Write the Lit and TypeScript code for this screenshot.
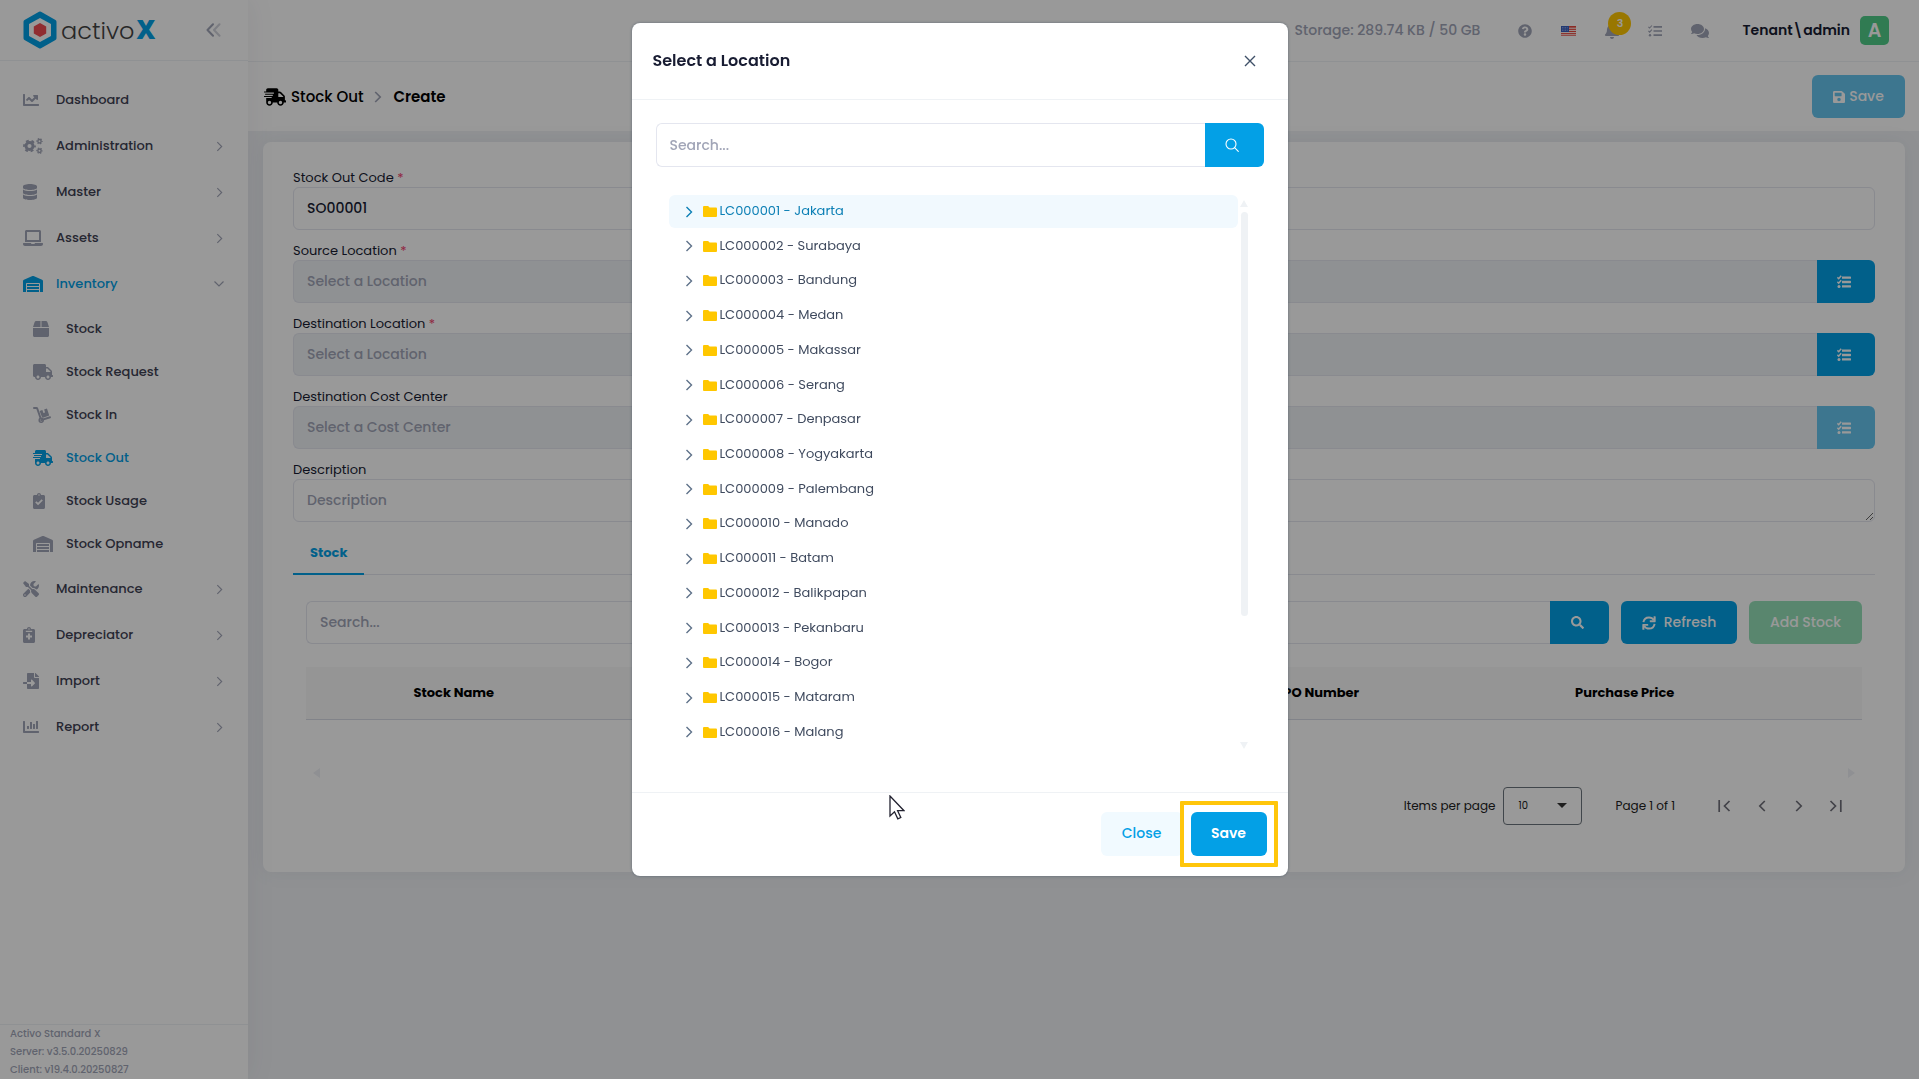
import { LitElement, html, svg, css, nothing } from "lit";
import { customElement, property } from "lit/decorators.js";
import { classMap } from "lit/directives/class-map.js";

type Glyph = { box: string; art: unknown };

const WHEELS =
  "M160 464c-26.5 0-48-21.5-48-48s21.5-48 48-48 48 21.5 48 48-21.5 48-48 48zm320 0c-26.5 0-48-21.5-48-48s21.5-48 48-48 48 21.5 48 48-21.5 48-48 48zm80-208H416V144h44.1l99.9 99.9V256z";

const GLYPHS: Record<string, Glyph> = {
  chartLine: {
    box: "0 0 512 512",
    art: svg`<path d="M496 384H64V80c0-8.84-7.16-16-16-16H16C7.16 64 0 71.16 0 80v336c0 17.67 14.33 32 32 32h464c8.84 0 16-7.16 16-16v-32c0-8.84-7.16-16-16-16zM464 96H345.94c-21.38 0-32.09 25.85-16.97 40.97l32.4 32.4L288 242.75l-73.37-73.37c-12.5-12.5-32.76-12.5-45.25 0l-68.69 68.69c-6.25 6.25-6.25 16.38 0 22.63l22.62 22.62c6.25 6.25 16.38 6.25 22.63 0L192 237.25l73.37 73.37c12.5 12.5 32.76 12.5 45.25 0l96-96 32.4 32.4c15.12 15.12 40.97 4.41 40.97-16.97V112c.01-8.84-7.15-16-15.99-16z"/>`,
  },
  cogs: {
    box: "0 0 640 512",
    art: svg`<g fill="none" stroke="currentColor">
      <circle cx="208" cy="256" r="112" stroke-width="92"/>
      <circle cx="208" cy="256" r="176" stroke-width="56" stroke-dasharray="92 92.3" stroke-dashoffset="46"/>
      <circle cx="528" cy="104" r="54" stroke-width="46"/>
      <circle cx="528" cy="104" r="86" stroke-width="34" stroke-dasharray="45 45" stroke-dashoffset="22"/>
      <circle cx="528" cy="408" r="54" stroke-width="46"/>
      <circle cx="528" cy="408" r="86" stroke-width="34" stroke-dasharray="45 45" stroke-dashoffset="22"/></g>`,
  },
  database: {
    box: "0 0 448 512",
    art: svg`<path d="M448 73.143v45.714C448 159.143 347.667 192 224 192S0 159.143 0 118.857V73.143C0 32.857 100.333 0 224 0s224 32.857 224 73.143zM448 176v102.857C448 319.143 347.667 352 224 352S0 319.143 0 278.857V176c48.125 33.143 136.208 48.572 224 48.572S399.874 209.143 448 176zm0 160v102.857C448 479.143 347.667 512 224 512S0 479.143 0 438.857V336c48.125 33.143 136.208 48.572 224 48.572S399.874 369.143 448 336z"/>`,
  },
  laptop: {
    box: "0 0 640 512",
    art: svg`<path d="M624 416H381.54c-.74 19.81-14.71 32-32.74 32H288c-18.69 0-33.02-17.47-32.77-32H16c-8.8 0-16 7.2-16 16v16c0 35.2 28.8 64 64 64h512c35.2 0 64-28.8 64-64v-16c0-8.8-7.2-16-16-16zM576 48c0-26.4-21.6-48-48-48H112C85.6 0 64 21.6 64 48v336h512V48zm-64 272H128V64h384v256z"/>`,
  },
  warehouse: {
    box: "0 0 640 512",
    art: svg`<path d="M504 352H136.4c-4.4 0-8 3.6-8 8l-.1 48c0 4.4 3.6 8 8 8H504c4.4 0 8-3.6 8-8v-48c0-4.4-3.6-8-8-8zm0 96H136.1c-4.4 0-8 3.6-8 8l-.1 48c0 4.4 3.6 8 8 8h368c4.4 0 8-3.6 8-8v-48c0-4.4-3.6-8-8-8zm0-192H136.6c-4.4 0-8 3.6-8 8l-.1 48c0 4.4 3.6 8 8 8H504c4.4 0 8-3.6 8-8v-48c0-4.4-3.6-8-8-8zm106.5-139L338.4 3.7a48.15 48.15 0 0 0-36.9 0L29.5 117C11.7 124.5 0 141.9 0 161.3V504c0 4.4 3.6 8 8 8h80c4.4 0 8-3.6 8-8V256c0-17.6 14.6-32 32.6-32h382.8c18 0 32.6 14.4 32.6 32v248c0 4.4 3.6 8 8 8h80c4.4 0 8-3.6 8-8V161.3c0-19.4-11.7-36.8-29.5-44.3z"/>`,
  },
  box: {
    box: "0 0 512 512",
    art: svg`<path d="M509.5 184.6L458.9 32.8C452.4 13.2 434.1 0 413.4 0H272v192h238.7c-.4-2.5-.4-5-1.2-7.4zM240 0H98.6c-20.7 0-39 13.2-45.5 32.8L2.5 184.6c-.8 2.4-.8 4.9-1.2 7.4H240V0zM0 224v240c0 26.5 21.5 48 48 48h416c26.5 0 48-21.5 48-48V224H0z"/>`,
  },
  truck: {
    box: "0 0 640 512",
    art: svg`<path d="M624 352h-16V243.9c0-12.7-5.1-24.9-14.1-33.9L494 110.1c-9-9-21.2-14.1-33.9-14.1H416V48c0-26.5-21.5-48-48-48H48C21.5 0 0 21.5 0 48v320c0 26.5 21.5 48 48 48h16c0 53 43 96 96 96s96-43 96-96h128c0 53 43 96 96 96s96-43 96-96h48c8.8 0 16-7.2 16-16v-32c0-8.8-7.2-16-16-16z${WHEELS}" fill-rule="evenodd"/>`,
  },
  dolly: {
    box: "0 0 576 512",
    art: svg`<path d="M30 30h82c10 0 18 6 21 15l112 320" fill="none" stroke="currentColor" stroke-width="60" stroke-linecap="round" stroke-linejoin="round"/>
      <path d="M262 420l284-92" fill="none" stroke="currentColor" stroke-width="60" stroke-linecap="round"/>
      <circle cx="262" cy="424" r="64" fill="none" stroke="currentColor" stroke-width="46"/>
      <path d="M232 118l68-24 32 96 56-18-32-96 68-24c12-4 24 2 28 14l62 188c4 12-2 24-14 28L318 342c-12 4-24-2-28-14L218 146c-4-12 2-24 14-28z"/>`,
  },
  truckFast: {
    box: "0 0 640 512",
    art: svg`<path d="M624 352h-16V243.9c0-12.7-5.1-24.9-14.1-33.9L494 110.1c-9-9-21.2-14.1-33.9-14.1H416V48c0-26.5-21.5-48-48-48H112C85.5 0 64 21.5 64 48v48H8c-4.4 0-8 3.6-8 8v16c0 4.4 3.6 8 8 8h272c4.4 0 8 3.6 8 8v16c0 4.4-3.6 8-8 8H40c-4.4 0-8 3.6-8 8v16c0 4.4 3.6 8 8 8h208c4.4 0 8 3.6 8 8v16c0 4.4-3.6 8-8 8H8c-4.4 0-8 3.6-8 8v16c0 4.4 3.6 8 8 8h208c4.4 0 8 3.6 8 8v16c0 4.4-3.6 8-8 8H64v128c0 53 43 96 96 96s96-43 96-96h128c0 53 43 96 96 96s96-43 96-96h48c8.8 0 16-7.2 16-16v-32c0-8.8-7.2-16-16-16z${WHEELS}" fill-rule="evenodd"/>`,
  },
  clipboardCheck: {
    box: "0 0 384 512",
    art: svg`<path fill-rule="evenodd" d="M336 64h-80c0-35.3-28.7-64-64-64s-64 28.7-64 64H48C21.5 64 0 85.5 0 112v352c0 26.5 21.5 48 48 48h288c26.5 0 48-21.5 48-48V112c0-26.5-21.5-48-48-48zM192 40c13.3 0 24 10.7 24 24s-10.7 24-24 24-24-10.7-24-24 10.7-24 24-24zM70 300l40-40 52 52 114-114 40 40-154 154z"/>`,
  },
  clipboardPlus: {
    box: "0 0 384 512",
    art: svg`<path fill-rule="evenodd" d="M336 64h-80c0-35.3-28.7-64-64-64s-64 28.7-64 64H48C21.5 64 0 85.5 0 112v352c0 26.5 21.5 48 48 48h288c26.5 0 48-21.5 48-48V112c0-26.5-21.5-48-48-48zM192 36c13.3 0 24 10.7 24 24s-10.7 24-24 24-24-10.7-24-24 10.7-24 24-24zM90 120h204v36H90zM160 208h64v64h64v60h-64v64h-64v-64H96v-60h64z"/>`,
  },
  tools: {
    box: "0 0 512 512",
    art: svg`<path d="M501.1 395.7L384 278.6c-23.1-23.1-57.6-27.6-85.4-13.9L192 158.1V96L64 0 0 64l96 128h62.1l106.6 106.6c-13.6 27.8-9.2 62.3 13.9 85.4l117.1 117.1c14.6 14.6 38.2 14.6 52.7 0l52.7-52.7c14.5-14.6 14.5-38.2 0-52.7zM331.7 225c28.3 0 54.9 11 74.9 31l19.4 19.4c15.8-6.9 30.8-16.5 43.8-29.5 37.1-37.1 49.7-89.3 37.9-136.7-2.2-9-13.5-12.1-20.1-5.5l-74.4 74.4-67.9-11.3L334 98.9l74.4-74.4c6.6-6.6 3.4-17.9-5.7-20.2-47.4-11.7-99.6.9-136.6 37.9-28.5 28.5-41.9 66.1-41.2 103.6l82.1 82.1c8.1-1.9 16.5-2.9 24.7-2.9zm-103.9 82l-56.7-56.7L18.7 402.8c-25 25-25 65.5 0 90.5s65.5 25 90.5 0l123.6-123.6c-7.6-19.9-9.9-41.6-5-62.7zM64 472c-13.2 0-24-10.8-24-24 0-13.3 10.7-24 24-24s24 10.7 24 24c0 13.2-10.7 24-24 24z"/>`,
  },
  fileImport: {
    box: "0 0 512 512",
    art: svg`<path d="M16 288c-8.8 0-16 7.2-16 16v32c0 8.8 7.2 16 16 16h112v-64zm489-183L407.1 7c-4.5-4.5-10.6-7-17-7H384v128h128v-6.1c0-6.3-2.5-12.4-7-16.9zm-153 31V0H152c-13.3 0-24 10.7-24 24v264h128v-65.2c0-14.3 17.3-21.4 27.4-11.3L379 308c6.6 6.7 6.6 17.4 0 24l-95.7 96.4c-10.1 10.1-27.4 3-27.4-11.3V352H128v136c0 13.3 10.7 24 24 24h336c13.3 0 24-10.7 24-24V160H376c-13.2 0-24-10.8-24-24z"/>`,
  },
  chartBar: {
    box: "0 0 512 512",
    art: svg`<path d="M332.8 320h38.4c6.4 0 12.8-6.4 12.8-12.8V172.8c0-6.4-6.4-12.8-12.8-12.8h-38.4c-6.4 0-12.8 6.4-12.8 12.8v134.4c0 6.4 6.4 12.8 12.8 12.8zm96 0h38.4c6.4 0 12.8-6.4 12.8-12.8V76.8c0-6.4-6.4-12.8-12.8-12.8h-38.4c-6.4 0-12.8 6.4-12.8 12.8v230.4c0 6.4 6.4 12.8 12.8 12.8zm-288 0h38.4c6.4 0 12.8-6.4 12.8-12.8v-70.4c0-6.4-6.4-12.8-12.8-12.8h-38.4c-6.4 0-12.8 6.4-12.8 12.8v70.4c0 6.4 6.4 12.8 12.8 12.8zm96 0h38.4c6.4 0 12.8-6.4 12.8-12.8V108.8c0-6.4-6.4-12.8-12.8-12.8h-38.4c-6.4 0-12.8 6.4-12.8 12.8v198.4c0 6.4 6.4 12.8 12.8 12.8zM496 384H64V80c0-8.84-7.16-16-16-16H16C7.16 64 0 71.16 0 80v336c0 17.67 14.33 32 32 32h464c8.84 0 16-7.16 16-16v-32c0-8.84-7.16-16-16-16z"/>`,
  },
  help: {
    box: "0 0 512 512",
    art: svg`<path d="M504 256c0 136.997-111.043 248-248 248S8 392.997 8 256C8 119.083 119.043 8 256 8s248 111.083 248 248zM262.655 90c-54.497 0-89.255 22.957-116.549 63.758-3.536 5.286-2.353 12.415 2.715 16.258l34.699 26.31c5.205 3.947 12.621 3.008 16.665-2.122 17.864-22.658 30.113-35.797 57.303-35.797 20.429 0 45.698 13.148 45.698 32.958 0 14.976-12.363 22.667-32.534 33.976C247.128 238.528 216 254.941 216 296v4c0 6.627 5.373 12 12 12h56c6.627 0 12-5.373 12-12v-1.333c0-28.462 83.186-29.647 83.186-106.667 0-58.002-60.165-102-116.531-102zM256 338c-25.365 0-46 20.635-46 46 0 25.364 20.635 46 46 46s46-20.636 46-46c0-25.365-20.635-46-46-46z"/>`,
  },
  bell: {
    box: "0 0 448 512",
    art: svg`<path d="M224 512c35.32 0 63.97-28.65 63.97-64H160.03c0 35.35 28.65 64 63.97 64zm215.39-149.71c-19.32-20.76-55.47-51.99-55.47-154.29 0-77.7-54.48-139.9-127.94-155.16V32c0-17.67-14.32-32-31.98-32s-31.98 14.33-31.98 32v20.84C118.56 68.1 64.08 130.3 64.08 208c0 102.3-36.15 133.53-55.47 154.29-6 6.45-8.66 14.16-8.61 21.71.11 16.4 12.98 32 32.1 32h383.8c19.12 0 32-15.6 32.1-32 .05-7.55-2.61-15.27-8.61-21.71z"/>`,
  },
  tasks: {
    box: "0 0 14 12",
    art: svg`<path d="M5.5 1.1H14v1.6H5.5zM5.5 5.2H14v1.6H5.5zM5.5 9.3H14v1.6H5.5z"/><circle cx="2" cy="10.2" r="1.2"/><path d="M.4 1.8l1.2 1.2L3.9.5M.4 5.9l1.2 1.2L3.9 4.6" fill="none" stroke="currentColor" stroke-width="1.1"/>`,
  },
  tasksBold: {
    box: "0 0 14 14",
    art: svg`<path d="M5 1.400h8.400q.6 0 .6.6v1.200q0 .6-.6.6H5zM5 5.800h8.400q.6 0 .6.6v1.200q0 .6-.6.6H5zM5 10.200h8.400q.6 0 .6.6v1.200q0 .6-.6.6H5z"/><circle cx="2" cy="11.500" r="1.500"/><path d="M.4 2.400l1.300 1.300L4.200.8M.4 6.900l1.300 1.300L4.200 5.300" fill="none" stroke="currentColor" stroke-width="1.500"/>`,
  },
  comments: {
    box: "0 0 576 512",
    art: svg`<path d="M416 192c0-88.4-93.1-160-208-160S0 103.6 0 192c0 34.3 14.1 65.9 38 92-13.4 30.2-35.5 54.2-35.8 54.5-2.2 2.3-2.8 5.7-1.5 8.7S4.8 352 8 352c36.6 0 66.9-12.3 88.7-25 32.2 15.7 70.3 25 111.3 25 114.9 0 208-71.6 208-160zm122 220c23.9-26 38-57.7 38-92 0-66.9-53.5-124.2-129.3-148.1.9 6.6 1.3 13.3 1.3 20.1 0 105.9-107.7 192-240 192-10.8 0-21.3-.8-31.7-1.9C207.8 439.6 281.8 480 368 480c41 0 79.1-9.2 111.3-25 21.8 12.7 52.1 25 88.7 25 3.2 0 6.1-1.9 7.3-4.8 1.3-2.9.7-6.3-1.5-8.7-.3-.3-22.4-24.2-35.8-54.5z"/>`,
  },
  flag: {
    box: "0 0 15 10",
    art: svg`<rect width="15" height="10" fill="#e8483f"/><path d="M0 2.2h15M0 4.4h15M0 6.6h15M0 8.8h15" stroke="#fff" stroke-width="1"/><rect width="8" height="6" fill="#3a5fc0"/><path d="M1 1.5h6M1 3h6M1 4.5h6" stroke="#cfd9f5" stroke-width=".6" stroke-dasharray=".8 .8"/>`,
  },
  search: {
    box: "0 0 512 512",
    art: svg`<path d="M505 442.7L405.3 343c-4.5-4.5-10.6-7-17-7H372c27.6-35.3 44-79.7 44-128C416 93.1 322.9 0 208 0S0 93.1 0 208s93.1 208 208 208c48.3 0 92.7-16.4 128-44v16.3c0 6.4 2.5 12.5 7 17l99.7 99.7c9.4 9.4 24.6 9.4 33.9 0l28.3-28.3c9.4-9.4 9.4-24.6.1-34zM208 336c-70.7 0-128-57.2-128-128 0-70.7 57.2-128 128-128 70.7 0 128 57.2 128 128 0 70.7-57.2 128-128 128z"/>`,
  },
  searchThin: {
    box: "0 0 14 14",
    art: svg`<g fill="none" stroke="currentColor" stroke-width="1.1" stroke-linecap="round"><circle cx="6" cy="6" r="5"/><path d="M9.6 9.6l3.7 3.7"/></g>`,
  },
  save: {
    box: "0 0 448 512",
    art: svg`<path fill-rule="evenodd" d="M433.941 129.941l-83.882-83.882A48 48 0 0 0 316.118 32H48C21.49 32 0 53.49 0 80v352c0 26.51 21.49 48 48 48h352c26.51 0 48-21.49 48-48V163.882a48 48 0 0 0-14.059-33.941zM224 416c-35.346 0-64-28.654-64-64s28.654-64 64-64 64 28.654 64 64-28.654 64-64 64zM76 96h232c7 0 12 5 12 12v104c0 7-5 12-12 12H76c-7 0-12-5-12-12V108c0-7 5-12 12-12z"/>`,
  },
  sync: {
    box: "0 0 512 512",
    art: svg`<g fill="none" stroke="currentColor" stroke-width="72"><path d="M52 226C68 120 150 52 256 52c76 0 140 38 178 96"/><path d="M460 286c-16 106-98 174-204 174-76 0-140-38-178-96"/></g><path d="M424 8h56c12 0 20 8 20 20v176c0 12-8 20-20 20H304c-12 0-20-8-20-20v-52h140zM88 504H32c-12 0-20-8-20-20V308c0-12 8-20 20-20h176c12 0 20 8 20 20v52H88z"/>`,
  },
  folder: {
    box: "0 0 14 11",
    art: svg`<path d="M1.2 0h3.9l1.5 1.5h6.2c.7 0 1.2.5 1.2 1.2v7c0 .7-.5 1.300-1.200 1.300H1.200C.5 11 0 10.400 0 9.700V1.200C0 .5.500 0 1.200 0z"/>`,
  },
  right: {
    box: "0 0 8 12",
    art: svg`<path d="M1.5 1l5 5-5 5" fill="none" stroke="currentColor" stroke-width="1.3"/>`,
  },
  rightBold: {
    box: "0 0 8 12",
    art: svg`<path d="M1.2 1l5 5-5 5" fill="none" stroke="currentColor" stroke-width="1.7"/>`,
  },
  twist: {
    box: "0 0 8 12",
    art: svg`<path d="M1.5 1l5 5-5 5" fill="none" stroke="currentColor" stroke-width="1.4"/>`,
  },
  left: {
    box: "0 0 8 12",
    art: svg`<path d="M6.8 1l-5 5 5 5" fill="none" stroke="currentColor" stroke-width="1.7"/>`,
  },
  first: {
    box: "0 0 13 12",
    art: svg`<path d="M1.2 0v12M11.500 1l-5 5 5 5" fill="none" stroke="currentColor" stroke-width="1.7"/>`,
  },
  last: {
    box: "0 0 13 12",
    art: svg`<path d="M11.800 0v12M1.500 1l5 5-5 5" fill="none" stroke="currentColor" stroke-width="1.7"/>`,
  },
  down: {
    box: "0 0 12 8",
    art: svg`<path d="M1.5 1.5l4.500 4.500 4.500-4.500" fill="none" stroke="currentColor" stroke-width="1.2"/>`,
  },
  collapse: {
    box: "0 0 15 14",
    art: svg`<g fill="none" stroke="currentColor" stroke-width="2" stroke-linecap="round" stroke-linejoin="round"><path d="M7 1.200L1.500 7 7 12.800"/><path d="M13.500 1.200L8 7l5.500 5.800" opacity=".5"/></g>`,
  },
  close: {
    box: "0 0 12 12",
    art: svg`<path d="M1 1l10 10M11 1L1 11" fill="none" stroke="currentColor" stroke-width="1.4"/>`,
  },
};

@customElement("ui-icon")
class UiIcon extends LitElement {
  @property() name = "";
  @property({ type: Number }) width = 16;
  @property({ type: Number }) height = 16;
  static styles = css`
    :host { display: inline-flex; flex: none; }
    .glyph { display: block; fill: currentColor; }
  `;
  render() {
    const g = GLYPHS[this.name];
    return html`<svg class="glyph" aria-hidden="true" width=${this.width} height=${this.height} viewBox=${g.box}>${g.art}</svg>`;
  }
}

const icon = (name: string, width: number, height = width) =>
  html`<ui-icon name=${name} .width=${width} .height=${height}></ui-icon>`;

type NavItem = { text: string; glyph: string; w: number; arrow?: string; active?: boolean; children?: NavItem[] };

const NAV: NavItem[] = [
  { text: "Dashboard", glyph: "chartLine", w: 16 },
  { text: "Administration", glyph: "cogs", w: 20, arrow: "right" },
  { text: "Master", glyph: "database", w: 14, arrow: "right" },
  { text: "Assets", glyph: "laptop", w: 20, arrow: "right" },
  {
    text: "Inventory", glyph: "warehouse", w: 20, arrow: "down", active: true,
    children: [
      { text: "Stock", glyph: "box", w: 16 },
      { text: "Stock Request", glyph: "truck", w: 20 },
      { text: "Stock In", glyph: "dolly", w: 18 },
      { text: "Stock Out", glyph: "truckFast", w: 20, active: true },
      { text: "Stock Usage", glyph: "clipboardCheck", w: 12 },
      { text: "Stock Opname", glyph: "warehouse", w: 20 },
    ],
  },
  { text: "Maintenance", glyph: "tools", w: 16, arrow: "right" },
  { text: "Depreciator", glyph: "clipboardPlus", w: 12, arrow: "right" },
  { text: "Import", glyph: "fileImport", w: 16, arrow: "right" },
  { text: "Report", glyph: "chartBar", w: 16, arrow: "right" },
];

const CITIES = [
  "Jakarta", "Surabaya", "Bandung", "Medan", "Makassar", "Serang", "Denpasar", "Yogyakarta",
  "Palembang", "Manado", "Batam", "Balikpapan", "Pekanbaru", "Bogor", "Mataram", "Malang",
];

@customElement("app-root")
class AppRoot extends LitElement {
  static styles = css`
    :host {
      display: block;
      font-family: Poppins, Inter, "Open Sans", sans-serif;
      font-size: 13px;
      color: #181c32;
      --blue: #03a0e6;
      --line: #e4e6ef;
      --muted: #a1a5b7;
    }
    *, *::before, *::after { box-sizing: border-box; }
    button, input, textarea, select { font: inherit; margin: 0; }
    button { cursor: pointer; border: 0; padding: 0; background: none; color: inherit; }
    a { color: inherit; text-decoration: none; }
    ul { list-style: none; margin: 0; padding: 0; }

    .app { display: grid; grid-template-columns: 248px minmax(0, 1fr); min-height: 100vh; background: #f0f2f5; }

    .side { position: relative; z-index: 1; display: flex; flex-direction: column; height: 100vh; background: #fff; box-shadow: 0 0 28px rgba(82, 63, 105, .08); }
    .brand { display: flex; align-items: center; justify-content: space-between; height: 61px; padding: 0 27px 0 23px; border-bottom: 1px solid #eff2f5; }
    .logo { display: flex; align-items: center; gap: 4px; font-size: 24px; line-height: 34px; font-weight: 300; color: #444; }
    .word { display: flex; align-items: baseline; gap: 2px; }
    .logo-x { font-family: "Open Sans", sans-serif; font-size: 26px; font-weight: 800; color: var(--blue); }
    .mark { display: block; flex: none; }
    .fold { display: flex; color: var(--muted); }
    .nav { flex: 1; padding-top: 16px; }
    .link { display: flex; align-items: center; height: 46px; padding: 0 23px; font-weight: 500; color: #3f4254; }
    .link .pic { display: flex; width: 33px; color: var(--muted); }
    .link .text { flex: 1; }
    .link .arrow { display: flex; justify-content: center; width: 12px; color: var(--muted); }
    .sub { padding-bottom: 1px; }
    .sub .link { height: 43px; padding-left: 33px; }
    .link.on, .link.on .pic { color: var(--blue); }
    .build { height: 55px; overflow: hidden; border-top: 1px solid #eff2f5; padding-left: 10px; font-size: 10px; line-height: 18px; font-weight: 500; color: var(--muted); }

    .main { min-width: 0; }
    .top { display: flex; align-items: center; justify-content: flex-end; height: 62px; padding: 0 30px; background: #fff; border-bottom: 1px solid #eff2f5; color: var(--muted); }
    .quota { font-size: 14px; font-weight: 500; margin-right: 38px; }
    .tools { display: flex; align-items: center; gap: 29px; }
    .tools button { display: flex; }
    .bell { position: relative; }
    .count { position: absolute; left: 3px; top: -11px; width: 23px; height: 23px; border-radius: 50%; background: #ffc700; color: #fff; font-size: 11px; line-height: 23px; font-weight: 600; text-align: center; }
    .who { display: flex; align-items: center; gap: 10px; margin-left: 33px; font-size: 14px; font-weight: 600; color: #181c32; }
    .avatar { width: 29px; height: 29px; border-radius: 5px; background: #50cd89; color: #fff; font-size: 19px; line-height: 29px; font-weight: 600; text-align: center; }

    .bar { display: flex; align-items: center; justify-content: space-between; height: 69px; padding: 0 14px 0 16px; background: #fff; }
    .crumbs { display: flex; align-items: center; font-size: 15px; font-weight: 500; color: #000; }
    .crumbs .trail { display: flex; align-items: center; gap: 5px; }
    .crumbs .sep { display: flex; margin: 0 12px 0 10px; color: var(--muted); }
    .crumbs strong { font-weight: 600; }

    .btn { display: flex; align-items: center; justify-content: center; height: 43px; border-radius: 6px; background: var(--blue); color: #fff; font-size: 14px; font-weight: 500; }
    .btn.faded { opacity: .6; }
    .btn.green { background: #50cd89; }
    .bar .btn { width: 93px; gap: 4px; }

    .card { margin: 11px 14px 0 15px; padding: 26px 30px 47px; background: #fff; border-radius: 8px; box-shadow: 0 0 20px rgba(76, 87, 125, .08); }
    .field { margin-bottom: 11px; }
    .field label { display: block; line-height: 19px; color: #181c32; }
    .req { color: #f1416c; }
    .box { display: block; width: 100%; min-width: 0; height: 43px; padding: 0 13px; border: 1px solid var(--line); border-radius: 6px; background: #fff; color: #181c32; font-size: 14px; font-weight: 500; outline: none; }
    textarea.box { padding: 10px 13px; line-height: 21px; min-height: 43px; }
    .box::placeholder { color: var(--muted); opacity: 1; }
    .box[readonly] { background: #eff2f5; }
    .join { display: flex; }
    .join .box { flex: 1; border-right: 0; border-radius: 6px 0 0 6px; }
    .join .btn { width: 58px; padding-right: 4px; border-radius: 0 6px 6px 0; }
    .join.query .btn { width: 59px; }

    .tabs { display: flex; height: 42px; border-bottom: 1px solid var(--line); }
    .tab { padding: 0 17px; height: 42px; border-bottom: 2px solid var(--blue); color: var(--blue); font-weight: 700; }
    .panel { padding: 26px 13px 0; }
    .find { display: flex; gap: 12px; }
    .find .join { flex: 1; }
    .find .btn.refresh { width: 116px; gap: 8px; }
    .find .btn.green { width: 113px; }
    .grid { width: 100%; margin-top: 23px; border-collapse: collapse; table-layout: fixed; color: #000; }
    .grid tr { height: 52px; background: #f8f8f9; border-bottom: 1px solid #d8dbe4; }
    .grid th { padding: 0; font-weight: 700; text-align: center; }
    .c-name { width: 19%; }
    .c-mid { width: 36.5%; }
    .c-po { width: 19.5%; }
    .c-price { width: 19.5%; }
    .hscroll { display: flex; justify-content: space-between; margin-top: 48px; padding: 0 7px; }
    .tri { display: block; fill: #eff0f5; }
    .pager { display: flex; align-items: center; justify-content: flex-end; margin-top: 9px; padding-right: 8px; font-size: 12px; color: #222; }
    .pager .size { display: flex; align-items: center; gap: 8px; }
    .pick { position: relative; display: flex; align-items: center; }
    .pick select { width: 79px; height: 38px; padding: 0 14px; border: 1px solid #6c757d; border-radius: 4px; appearance: none; background: transparent; font-size: 10px; color: #222; }
    .pick .caret { position: absolute; right: 15px; fill: #333; pointer-events: none; }
    .range { margin: 0 31px 0 33px; }
    .steps { display: flex; color: #70707a; }
    .steps button { display: flex; justify-content: center; width: 37px; }

    .veil { position: fixed; inset: 0; z-index: 2; display: flex; justify-content: center; align-items: flex-start; padding-top: 23px; background: rgba(0, 0, 0, .4); }
    .modal { position: relative; width: 100%; max-width: 656px; background: #fff; border-radius: 8px; box-shadow: 0 0 3px rgba(40, 60, 80, .5); }
    .m-head { display: flex; align-items: center; justify-content: space-between; height: 77px; padding: 0 32px 0 21px; border-bottom: 1px solid #eff2f5; }
    .m-head h2 { margin: 0; padding-bottom: 2px; font-size: 16px; font-weight: 600; color: #181c32; }
    .m-head button { display: flex; color: #3f5068; }
    .m-body { padding: 23px 24px 43px; }
    .m-body .box, .m-body .btn { height: 44px; }
    .tree { display: flex; gap: 2px; height: 554px; margin: 28px 15px 0 13px; }
    .rows { flex: 1; display: flex; flex-direction: column; justify-content: space-between; }
    .row { display: flex; align-items: center; width: 100%; height: 33px; padding-left: 16px; border-radius: 6px; color: #3f4a5e; text-align: left; }
    .row .twist { display: flex; width: 18px; color: #5e7189; }
    .row .dir { display: flex; width: 17px; color: #ffc700; }
    .row .name { padding-bottom: 1px; }
    .row.on { background: #f1f9fe; color: #0b7fb5; }
    .row.on .twist { color: #0b7fb5; }
    .rail { display: flex; flex-direction: column; align-items: center; width: 9px; padding: 5px 0 0; }
    .rail .thumb { width: 7px; height: 407px; margin: 5px 0 126px; border-radius: 4px; background: #eff2f5; }
    .rail .tri { fill: #eff2f5; }
    .m-foot { display: flex; align-items: center; justify-content: flex-end; gap: 8px; height: 84px; padding: 0 21px 1px 0; border-top: 1px solid #eff2f5; }
    .m-foot .btn { height: 44px; padding-bottom: 2px; font-weight: 600; }
    .m-foot .btn.soft { width: 82px; background: #f1faff; color: var(--blue); font-weight: 500; }
    .m-foot .btn.go { position: relative; width: 76px; }
    .m-foot .btn.go::after { content: ""; position: absolute; inset: -11px; border: 4px solid #ffc60a; border-radius: 1px; pointer-events: none; }
    .pointer { position: absolute; left: 257px; top: 772px; }
  `;

  private link(item: NavItem) {
    return html`<a href="#" class=${classMap({ link: true, on: !!item.active })}>
      <span class="pic">${icon(item.glyph, item.w, 16)}</span>
      <span class="text">${item.text}</span>
      ${item.arrow ? html`<span class="arrow">${item.arrow === "down" ? icon("down", 12, 8) : icon("right", 7, 11)}</span>` : nothing}
    </a>`;
  }

  private lookup(id: string, label: string, hint: string, required: boolean, faded: boolean) {
    return html`<div class="field">
      <label for=${id}>${label}${required ? html` <span class="req">*</span>` : nothing}</label>
      <div class="join">
        <input class="box" id=${id} placeholder=${hint} readonly />
        <button class=${classMap({ btn: true, faded })} aria-label=${hint}>${icon("tasksBold", 14)}</button>
      </div>
    </div>`;
  }

  render() {
    return html`
      <div class="app">
        <aside class="side">
          <div class="brand">
            <a class="logo" href="#">
              <svg class="mark" width="34" height="38" viewBox="0 0 34 38" aria-hidden="true">
                <path d="M17 2.500l14.500 8.300v16.400L17 35.500 2.500 27.200V10.800z" fill="#03a0e6" stroke="#03a0e6" stroke-width="4" stroke-linejoin="round"/>
                <path d="M17 7l11 6v12l-11 6-11-6V13z" fill="#fff"/>
                <path d="M17 12l6.200 3.500v7L17 26l-6.200-3.500v-7z" fill="#f04a50"/>
              </svg>
              <span class="word"><span>activo</span><span class="logo-x">X</span></span>
            </a>
            <button class="fold" aria-label="Collapse menu">${icon("collapse", 15, 14)}</button>
          </div>
          <nav class="nav">
            <ul>
              ${NAV.map((item) => html`<li>
                ${this.link(item)}
                ${item.children ? html`<ul class="sub">${item.children.map((c) => html`<li>${this.link(c)}</li>`)}</ul>` : nothing}
              </li>`)}
            </ul>
          </nav>
          <div class="build">
            <div>Activo Standard X</div>
            <div>Server: v3.5.0.20250829</div>
            <div>Client: v19.4.0.20250827</div>
          </div>
        </aside>

        <div class="main">
          <header class="top">
            <span class="quota">Storage: 289.74 KB / 50 GB</span>
            <div class="tools">
              <button aria-label="Help">${icon("help", 14)}</button>
              <button aria-label="Language">${icon("flag", 15, 10)}</button>
              <button class="bell" aria-label="Notifications">${icon("bell", 14, 16)}<span class="count">3</span></button>
              <button aria-label="Tasks">${icon("tasks", 14, 12)}</button>
              <button aria-label="Messages">${icon("comments", 18, 16)}</button>
            </div>
            <div class="who"><span>Tenant\\admin</span><div class="avatar">A</div></div>
          </header>

          <div class="bar">
            <div class="crumbs">
              <a class="trail" href="#">${icon("truckFast", 22, 18)}<span>Stock Out</span></a>
              <span class="sep">${icon("rightBold", 8, 12)}</span>
              <strong>Create</strong>
            </div>
            <button class="btn faded">${icon("save", 12, 14)}<span>Save</span></button>
          </div>

          <section class="card">
            <div class="field">
              <label for="code">Stock Out Code <span class="req">*</span></label>
              <input class="box" id="code" .value=${"SO00001"} />
            </div>
            ${this.lookup("source", "Source Location", "Select a Location", true, false)}
            ${this.lookup("dest", "Destination Location", "Select a Location", true, false)}
            ${this.lookup("cost", "Destination Cost Center", "Select a Cost Center", false, true)}
            <div class="field">
              <label for="desc">Description</label>
              <textarea class="box" id="desc" rows="1" placeholder="Description"></textarea>
            </div>

            <div class="tabs" role="tablist"><button class="tab" role="tab" aria-selected="true">Stock</button></div>
            <div class="panel">
              <div class="find">
                <div class="join query">
                  <input class="box" aria-label="Search stock" placeholder="Search..." />
                  <button class="btn" aria-label="Search">${icon("search", 13)}</button>
                </div>
                <button class="btn refresh">${icon("sync", 14)}<span>Refresh</span></button>
                <button class="btn green faded">Add Stock</button>
              </div>
              <table class="grid">
                <colgroup><col class="c-name" /><col class="c-mid" /><col class="c-po" /><col class="c-price" /><col /></colgroup>
                <thead>
                  <tr><th scope="col">Stock Name</th><td></td><th scope="col">PO Number</th><th scope="col">Purchase Price</th><td></td></tr>
                </thead>
              </table>
              <div class="hscroll">
                <svg class="tri" width="7" height="10" viewBox="0 0 7 10" aria-hidden="true"><path d="M7 0v10L0 5z"/></svg>
                <svg class="tri" width="7" height="10" viewBox="0 0 7 10" aria-hidden="true"><path d="M0 0v10l7-5z"/></svg>
              </div>
              <div class="pager">
                <div class="size">
                  <label for="size">Items per page</label>
                  <div class="pick">
                    <select id="size"><option>10</option></select>
                    <svg class="caret" width="10" height="5" viewBox="0 0 10 5" aria-hidden="true"><path d="M0 0h10L5 5z"/></svg>
                  </div>
                </div>
                <span class="range">Page 1 of 1</span>
                <div class="steps">
                  <button aria-label="First page">${icon("first", 13, 12)}</button>
                  <button aria-label="Previous page">${icon("left", 8, 12)}</button>
                  <button aria-label="Next page">${icon("rightBold", 8, 12)}</button>
                  <button aria-label="Last page">${icon("last", 13, 12)}</button>
                </div>
              </div>
            </div>
          </section>
        </div>
      </div>

      <div class="veil">
        <div class="modal" role="dialog" aria-modal="true" aria-labelledby="title">
          <header class="m-head">
            <h2 id="title">Select a Location</h2>
            <button aria-label="Close dialog">${icon("close", 12)}</button>
          </header>
          <div class="m-body">
            <div class="join query">
              <input class="box" aria-label="Search location" placeholder="Search..." />
              <button class="btn" aria-label="Search">${icon("searchThin", 14)}</button>
            </div>
            <div class="tree">
              <div class="rows" role="tree">
                ${CITIES.map((city, i) => html`<button role="treeitem" class=${classMap({ row: true, on: i === 0 })}>
                  <span class="twist">${icon("twist", 8, 12)}</span>
                  <span class="dir">${icon("folder", 14, 11)}</span>
                  <span class="name">LC${String(i + 1).padStart(6, "0")} - ${city}</span>
                </button>`)}
              </div>
              <div class="rail">
                <svg class="tri" width="8" height="7" viewBox="0 0 8 7" aria-hidden="true"><path d="M4 0l4 7H0z"/></svg>
                <div class="thumb"></div>
                <svg class="tri" width="8" height="7" viewBox="0 0 8 7" aria-hidden="true"><path d="M0 0h8L4 7z"/></svg>
              </div>
            </div>
          </div>
          <footer class="m-foot">
            <button class="btn soft">Close</button>
            <button class="btn go">Save</button>
          </footer>
          <svg class="pointer" width="16" height="25" viewBox="0 0 16 25" aria-hidden="true">
            <path d="M1 1v20l4.500-4.200 3.300 7 3-1.300-3.200-6.800H15z" fill="#fff" stroke="#222230" stroke-width="1.300"/>
          </svg>
        </div>
      </div>
    `;
  }
}
